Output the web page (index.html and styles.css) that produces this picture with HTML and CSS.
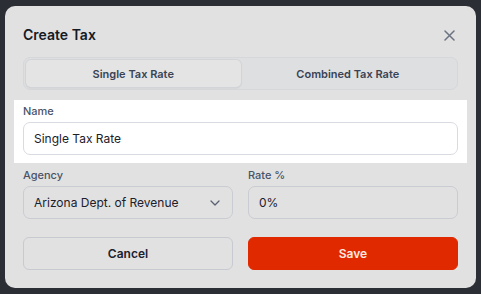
FILE: index.html
```html
<!DOCTYPE html>
<html>
<head>
<meta charset="utf-8">
<link rel="stylesheet" href="styles.css">
</head>
<body>
<div class="dialog">
  <div class="header">
    <h1 class="title">Create Tax</h1>
    <button class="close" aria-label="Close">
      <svg width="11" height="11" viewBox="0 0 11 11"><path d="M1 1L10 10M10 1L1 10" stroke="#6b7282" stroke-width="1.5" stroke-linecap="round"/></svg>
    </button>
  </div>
  <div class="tabs">
    <div class="tab active">Single Tax Rate</div>
    <div class="tab">Combined Tax Rate</div>
  </div>
  <div class="highlight">
    <label class="label">Name</label>
    <div class="input white">Single Tax Rate</div>
  </div>
  <div class="row">
    <div class="field">
      <label class="label">Agency</label>
      <div class="input select">
        <span>Arizona Dept. of Revenue</span>
        <svg width="10" height="6" viewBox="0 0 10 6"><path d="M1 1L5 5L9 1" fill="none" stroke="#5a6272" stroke-width="1.3" stroke-linecap="round" stroke-linejoin="round"/></svg>
      </div>
    </div>
    <div class="field">
      <label class="label">Rate %</label>
      <div class="input">0%</div>
    </div>
  </div>
  <div class="row actions">
    <button class="btn cancel">Cancel</button>
    <button class="btn save">Save</button>
  </div>
</div>
</body>
</html>
```

FILE: styles.css
```css
* { box-sizing: border-box; }
html, body { margin: 0; padding: 0; }
body {
  width: 481px;
  height: 294px;
  background: #2b2e35;
  font-family: Inter, "Noto Sans", sans-serif;
  overflow: hidden;
  padding: 6px 5px 6px 5px;
}
.dialog {
  width: 471px;
  height: 282px;
  background: #e1e1e1;
  border-radius: 10px;
  padding: 18px 18px 18px 18px;
  display: flex;
  flex-direction: column;
}
.header {
  display: flex;
  align-items: center;
  justify-content: space-between;
  height: 20px;
  margin-top: 1px;
  margin-bottom: -1px;
}
.title {
  margin: 0;
  font-size: 14px;
  font-weight: 600;
  color: #151a24;
  line-height: 20px;
}
.close {
  border: 0;
  background: none;
  padding: 0;
  width: 14px;
  height: 14px;
  margin-right: 2px;
  display: flex;
  align-items: center;
  justify-content: center;
}
.tabs {
  margin-top: 13px;
  height: 33px;
  border: 1px solid #d6d7da;
  border-radius: 7px;
  background: #dedfe1;
  padding: 2px;
  display: flex;
}
.tab {
  flex: 1;
  display: flex;
  align-items: center;
  justify-content: center;
  font-size: 11px;
  font-weight: 600;
  color: #3a4354;
  border-radius: 5px;
}
.tab.active {
  background: #e4e4e4;
  box-shadow: 0 0 0 1px #d3d4d7, 0 1px 2px rgba(0,0,0,0.12);
}
.highlight {
  margin: 10px -9px 0 -9px;
  background: #ffffff;
  padding: 4px 9px 8px 9px;
  display: flex;
  flex-direction: column;
}
.label {
  font-size: 11px;
  line-height: 14px;
  color: #4a5366;
  font-weight: 500;
  margin-bottom: 4px;
}
.input {
  height: 33px;
  border: 1px solid #c9ccd2;
  border-radius: 7px;
  padding: 0 9px 0 10px;
  display: flex;
  align-items: center;
  font-size: 12px;
  color: #1b202a;
}
.input.white {
  background: #ffffff;
  border-color: #d8dbe1;
}
.select {
  justify-content: space-between;
  padding-right: 12px;
}
.row {
  display: flex;
  gap: 15px;
  margin-top: 5px;
}
.field {
  flex: 1;
  display: flex;
  flex-direction: column;
}
.actions {
  margin-top: 18px;
}
.btn {
  flex: 1;
  height: 33px;
  border-radius: 6px;
  font-family: Inter, "Noto Sans", sans-serif;
  font-size: 12px;
  font-weight: 600;
}
.cancel {
  background: #e1e1e1;
  border: 1px solid #c7cad0;
  color: #1b2230;
}
.save {
  background: #e12900;
  border: 1px solid #e12900;
  color: #ffe9e2;
}
```
